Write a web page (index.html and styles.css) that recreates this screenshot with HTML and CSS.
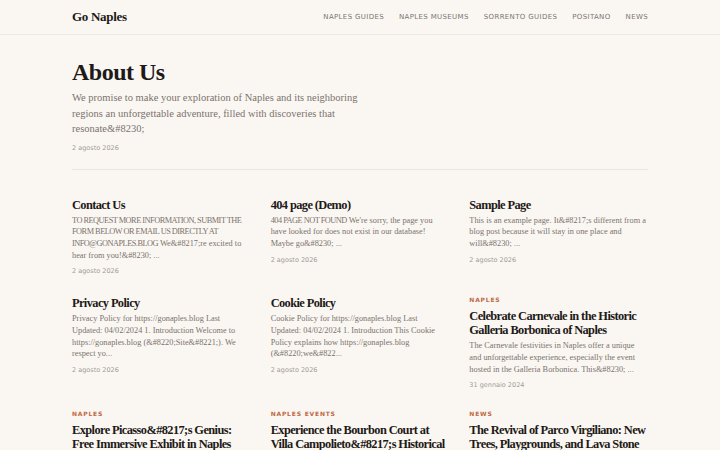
FILE: index.html
```html
<!DOCTYPE html>
<html lang="it">
<head>
<meta charset="utf-8">
<title>About Us - Go Naples</title>
<link rel="stylesheet" href="styles.css">
</head>
<body>
<header class="site-header">
  <div class="wrap header-inner">
    <div class="logo">Go Naples</div>
    <nav class="nav">
      <a>Naples Guides</a>
      <a>Naples Museums</a>
      <a>Sorrento Guides</a>
      <a>Positano</a>
      <a>News</a>
    </nav>
  </div>
</header>
<main class="wrap">
  <section class="intro">
    <h1 class="page-title">About Us</h1>
    <p class="lead">We promise to make your exploration of Naples and its neighboring regions an unforgettable adventure, filled with discoveries that resonate&amp;#8230;</p>
    <div class="date">2 agosto 2026</div>
  </section>
  <section class="grid">
    <article class="card">
      <h2 class="card-title">Contact Us</h2>
      <p class="excerpt"><span class="caps">TO REQUEST MORE INFORMATION, SUBMIT THE FORM BELOW OR EMAIL US DIRECTLY AT INFO@GONAPLES.BLOG</span> We&amp;#8217;re excited to hear from you!&amp;#8230; ...</p>
      <div class="date">2 agosto 2026</div>
    </article>
    <article class="card">
      <h2 class="card-title">404 page (Demo)</h2>
      <p class="excerpt"><span class="caps">404 PAGE NOT FOUND</span> We're sorry, the page you have looked for does not exist in our database! Maybe go&amp;#8230; ...</p>
      <div class="date">2 agosto 2026</div>
    </article>
    <article class="card">
      <h2 class="card-title">Sample Page</h2>
      <p class="excerpt">This is an example page. It&amp;#8217;s different from a blog post because it will stay in one place and will&amp;#8230; ...</p>
      <div class="date">2 agosto 2026</div>
    </article>
    <article class="card">
      <h2 class="card-title">Privacy Policy</h2>
      <p class="excerpt">Privacy Policy for https://gonaples.blog Last Updated: 04/02/2024 1. Introduction Welcome to https://gonaples.blog (&amp;#8220;Site&amp;#8221;). We respect yo...</p>
      <div class="date">2 agosto 2026</div>
    </article>
    <article class="card">
      <h2 class="card-title">Cookie Policy</h2>
      <p class="excerpt">Cookie Policy for https://gonaples.blog Last Updated: 04/02/2024 1. Introduction This Cookie Policy explains how https://gonaples.blog (&amp;#8220;we&amp;#822...</p>
      <div class="date">2 agosto 2026</div>
    </article>
    <article class="card">
      <div class="cat">Naples</div>
      <h2 class="card-title">Celebrate Carnevale in the Historic Galleria Borbonica of Naples</h2>
      <p class="excerpt">The Carnevale festivities in Naples offer a unique and unforgettable experience, especially the event hosted in the Galleria Borbonica. This&amp;#8230; ...</p>
      <div class="date">31 gennaio 2024</div>
    </article>
    <article class="card">
      <div class="cat">Naples</div>
      <h2 class="card-title">Explore Picasso&amp;#8217;s Genius: Free Immersive Exhibit in Naples</h2>
      <p class="excerpt">Discover the genius of Pablo Picasso in a free immersive exhibit in Naples.</p>
    </article>
    <article class="card">
      <div class="cat">Naples Events</div>
      <h2 class="card-title">Experience the Bourbon Court at Villa Campolieto&amp;#8217;s Historical Reenactment</h2>
      <p class="excerpt">A historical reenactment at Villa Campolieto.</p>
    </article>
    <article class="card">
      <div class="cat">News</div>
      <h2 class="card-title">The Revival of Parco Virgiliano: New Trees, Playgrounds, and Lava Stone Paths</h2>
      <p class="excerpt">Parco Virgiliano reopens.</p>
    </article>
  </section>
</main>
</body>
</html>
```
FILE: styles.css
```css
html, body {
  margin: 0;
  padding: 0;
  background: #faf7f3;
  color: #222;
}
body {
  font-family: "Liberation Serif", "DejaVu Serif", serif;
}
.wrap {
  width: 576px;
  margin: 0 auto;
}
.site-header {
  border-bottom: 1px solid #eee8e0;
}
.header-inner {
  height: 34px;
  display: flex;
  align-items: center;
  justify-content: space-between;
}
.logo {
  font-family: "Liberation Serif", serif;
  font-weight: bold;
  font-size: 13px;
  color: #1e1a17;
  letter-spacing: -0.3px;
}
.nav {
  display: flex;
  gap: 15px;
}
.nav a {
  font-family: "DejaVu Sans", sans-serif;
  font-size: 7px;
  text-transform: uppercase;
  letter-spacing: 0.35px;
  color: #7a7470;
}
.intro {
  padding-top: 23px;
  padding-bottom: 17px;
  border-bottom: 1px solid #ece6de;
}
.page-title {
  margin: 0;
  font-family: "Liberation Serif", serif;
  font-weight: bold;
  font-size: 24px;
  line-height: 28px;
  color: #1e1a17;
  letter-spacing: -0.5px;
}
.lead {
  margin: 4px 0 0;
  width: 295px;
  font-size: 10.5px;
  line-height: 15.5px;
  color: #7a726c;
}
.date {
  font-family: "DejaVu Sans", sans-serif;
  font-size: 6.5px;
  color: #a29a94;
  margin-top: 6px;
}
.intro .date {
  margin-top: 7px;
}
.grid {
  display: grid;
  grid-template-columns: repeat(3, 1fr);
  column-gap: 20px;
  row-gap: 21px;
  padding-top: 28px;
}
.card-title {
  margin: 0;
  font-family: "Liberation Serif", serif;
  font-weight: bold;
  font-size: 12.4px;
  line-height: 14px;
  letter-spacing: -0.6px;
  color: #1e1a17;
}
.excerpt {
  margin: 3px 0 0;
  font-size: 8.3px;
  line-height: 11.7px;
  color: #7a726c;
}
.caps {
  letter-spacing: -0.5px;
}
.cat {
  font-family: "DejaVu Sans", sans-serif;
  font-weight: bold;
  font-size: 6px;
  letter-spacing: 0.8px;
  text-transform: uppercase;
  color: #c0673f;
  margin-bottom: 6px;
}
```
